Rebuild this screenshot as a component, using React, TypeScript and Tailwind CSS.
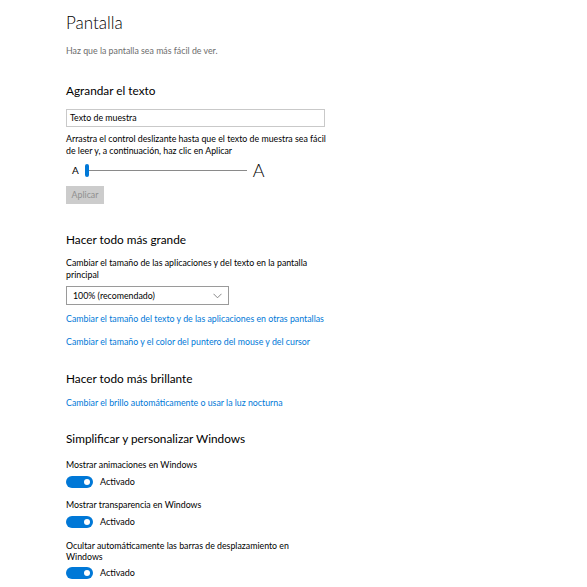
import React from "react";

const font = { fontFamily: 'Lato, "Open Sans", Arial, sans-serif' };

function Toggle() {
  return (
    <div className="flex items-center h-[12px] mt-[5px]">
      <div className="w-[27px] h-[12px] rounded-full bg-[#0078d7] flex items-center justify-end pr-[3px]">
        <div className="w-[6px] h-[6px] rounded-full bg-white" />
      </div>
      <span className="ml-[7px] text-[9px] leading-[12px] text-black">Activado</span>
    </div>
  );
}

export default function App() {
  return (
    <div className="w-[587px] h-[587px] bg-white overflow-hidden text-black" style={font}>
      <div className="pl-[66px] flex flex-col">
        <h1 className="mt-[10px] text-[17px] leading-[26px] font-light text-black">Pantalla</h1>
        <p className="mt-[9px] text-[8.8px] leading-[12px] text-[#6d6d6d]">Haz que la pantalla sea más fácil de ver.</p>

        <h2 className="mt-[26px] text-[11.8px] leading-[16px]">Agrandar el texto</h2>
        <div className="mt-[10px] w-[259px] h-[18px] border border-[#c9c9c9] flex items-center px-[3px] text-[8.8px]">Texto de muestra</div>
        <p className="mt-[6px] w-[264px] text-[8.8px] leading-[12px]">
          Arrastra el control deslizante hasta que el texto de muestra sea fácil de leer y, a continuación, haz clic en Aplicar
        </p>
        <div className="mt-[5px] h-[16px] flex items-center">
          <span className="ml-[6px] text-[10px] leading-[16px]">A</span>
          <div className="ml-[6px] w-[4px] h-[13px] rounded-full bg-[#0078d7]" />
          <div className="w-[158px] h-[1px] bg-[#8a8a8a]" />
          <span className="ml-[6px] text-[18px] leading-[16px] font-light">A</span>
        </div>
        <div className="mt-[8px] w-[38px] h-[18px] bg-[#cccccc] flex items-center justify-center text-[8.8px] text-[#8f8f8f]">Aplicar</div>

        <h2 className="mt-[28px] text-[11.8px] leading-[16px]">Hacer todo más grande</h2>
        <p className="mt-[9px] w-[262px] text-[8.8px] leading-[12px]">
          Cambiar el tamaño de las aplicaciones y del texto en la pantalla principal
        </p>
        <div className="mt-[5px] w-[163px] h-[19px] border border-[#9a9a9a] flex items-center justify-between pl-[6px] pr-[6px] text-[8.8px]">
          <span>100% (recomendado)</span>
          <svg width="9" height="6" viewBox="0 0 9 6" fill="none" stroke="#7a7a7a" strokeWidth="0.9">
            <path d="M0.5 0.8 L4.5 4.8 L8.5 0.8" />
          </svg>
        </div>
        <p className="mt-[8px] text-[8.8px] leading-[12px] text-[#0078d7]">Cambiar el tamaño del texto y de las aplicaciones en otras pantallas</p>
        <p className="mt-[11px] text-[8.8px] leading-[12px] text-[#0078d7]">Cambiar el tamaño y el color del puntero del mouse y del cursor</p>

        <h2 className="mt-[23px] text-[11.8px] leading-[16px]">Hacer todo más brillante</h2>
        <p className="mt-[10px] text-[8.8px] leading-[12px] text-[#0078d7]">Cambiar el brillo automáticamente o usar la luz nocturna</p>

        <h2 className="mt-[22px] text-[11.8px] leading-[16px]">Simplificar y personalizar Windows</h2>
        <p className="mt-[12px] text-[8.8px] leading-[12px]">Mostrar animaciones en Windows</p>
        <Toggle />
        <p className="mt-[11px] text-[8.8px] leading-[12px]">Mostrar transparencia en Windows</p>
        <Toggle />
        <p className="mt-[12px] w-[250px] text-[8.8px] leading-[11px]">Ocultar automáticamente las barras de desplazamiento en Windows</p>
        <Toggle />
      </div>
    </div>
  );
}
